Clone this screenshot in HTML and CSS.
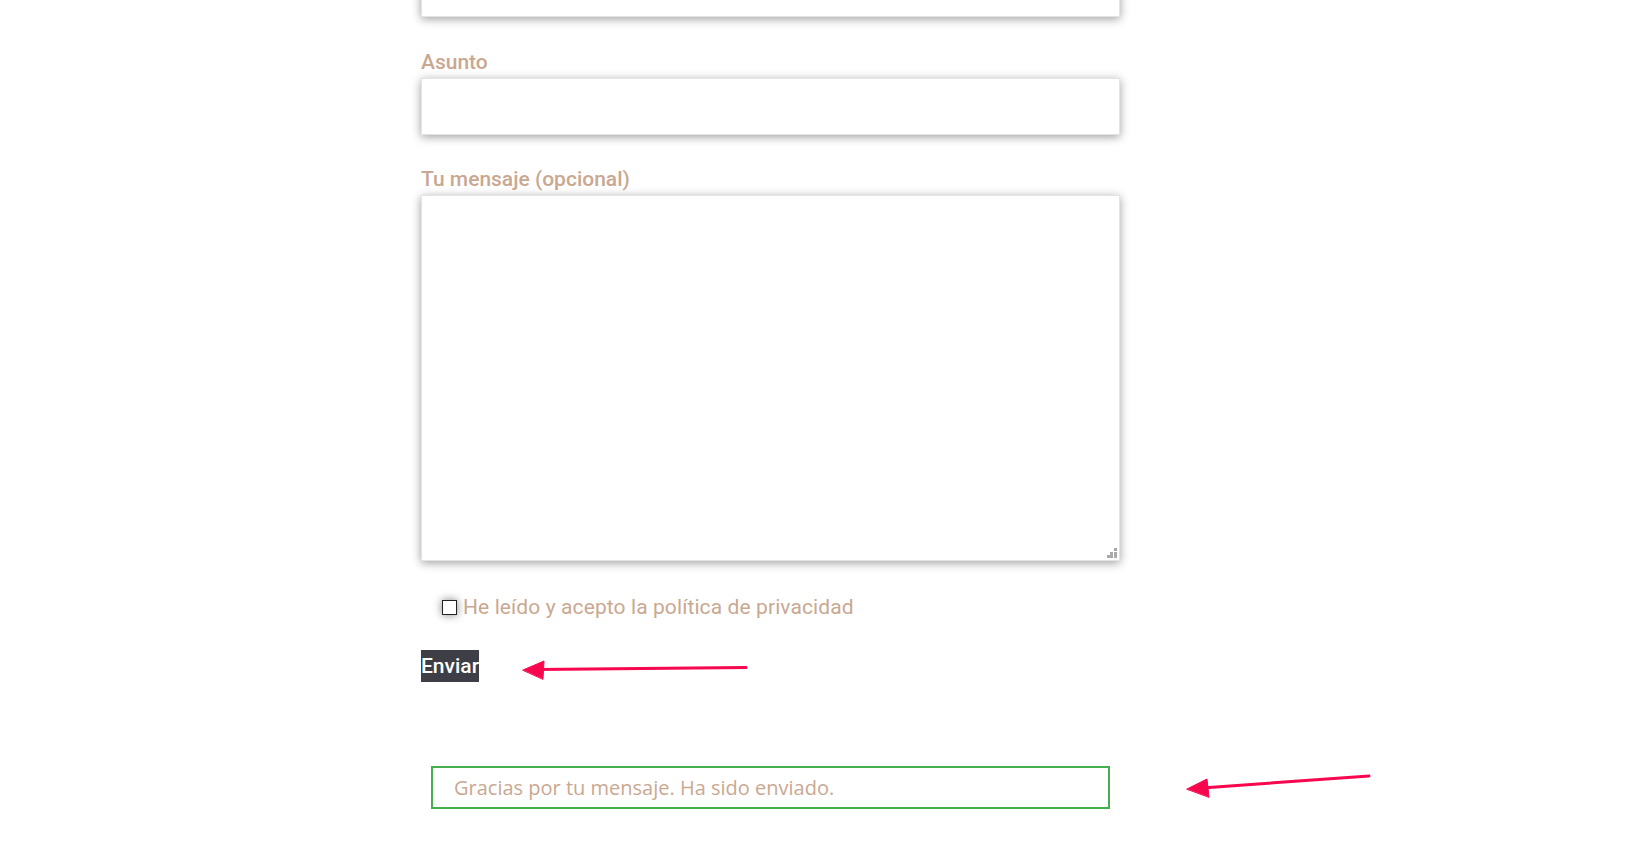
FILE: index.html
```html
<!DOCTYPE html>
<html lang="es">
<head>
  <meta charset="UTF-8" />
  <meta name="viewport" content="width=device-width, initial-scale=1.0"/>
  <title>Contacto</title>
  <link rel="stylesheet" href="styles.css">
</head>
<body>
  <form class="contact" onsubmit="return false">
    <div class="field field-top">
      <input type="email" class="input" />
    </div>

    <div class="field">
      <label for="subject">Asunto</label>
      <input type="text" id="subject" class="input" />
    </div>

    <div class="field">
      <label for="message">Tu mensaje (opcional)</label>
      <div class="area-wrap">
        <textarea id="message"></textarea>
        <span class="grip"></span>
      </div>
    </div>

    <label class="accept">
      <input type="checkbox" />
      <span>He leído y acepto la política de privacidad</span>
    </label>

    <div class="actions">
      <button type="submit">Enviar</button>
    </div>

    <div class="sent">Gracias por tu mensaje. Ha sido enviado.</div>
  </form>

  <!-- flechas de anotación -->
  <svg class="notes" width="1626" height="868" viewBox="0 0 1626 868">
    <g stroke="#f8074f" stroke-width="3" stroke-linecap="round" fill="#f8074f">
      <line x1="746" y1="667.5" x2="538" y2="669.5" />
      <polygon points="523,670 544,661 543,679" stroke-width="1" />
      <line x1="1369" y1="776" x2="1202" y2="788" />
      <polygon points="1187,789 1207,779 1209,797" stroke-width="1" />
    </g>
  </svg>
</body>
</html>
```

FILE: styles.css
```css
* {
  box-sizing: border-box;
}
body {
  margin: 0;
  background: #fff;
  font-family: Roboto, 'Liberation Sans', sans-serif;
  color: #c9a892;
  overflow: hidden;
}
.contact {
  width: 699px;
  margin-left: 421px;
}
.field {
  margin-bottom: 32px;
}
.field-top {
  margin-top: -40px;
  margin-bottom: 33px;
}
.field label {
  display: block;
  font-size: 21px;
  font-weight: 500;
  line-height: 24px;
  margin-bottom: 4px;
}
.input,
textarea {
  display: block;
  width: 100%;
  height: 57px;
  border: 1px solid #e4e4e4;
  background: #fff;
  box-shadow: 0 2px 9px rgba(0, 0, 0, 0.38);
  font: inherit;
  outline: none;
}
.area-wrap {
  position: relative;
}
textarea {
  height: 366px;
  resize: none;
}
.grip {
  position: absolute;
  right: 3px;
  bottom: 3px;
  width: 10px;
  height: 10px;
  background:
    linear-gradient(#aaa, #aaa) 7px 0 / 3px 3px no-repeat,
    linear-gradient(#aaa, #aaa) 3px 4px / 3px 3px no-repeat,
    linear-gradient(#aaa, #aaa) 7px 4px / 3px 3px no-repeat,
    linear-gradient(#aaa, #aaa) 0 7px / 3px 3px no-repeat,
    linear-gradient(#aaa, #aaa) 3px 7px / 3px 3px no-repeat,
    linear-gradient(#aaa, #aaa) 7px 7px / 3px 3px no-repeat;
}
.accept {
  display: flex;
  align-items: center;
  gap: 6px;
  margin-left: 21px;
  margin-top: 34px;
  font-size: 21px;
  line-height: 24px;
  letter-spacing: 0.1px;
}
.accept input {
  appearance: none;
  margin: 0;
  width: 15px;
  height: 15px;
  border: 1.5px solid #222;
  background: #fff;
  box-shadow: 0 0 9px rgba(0, 0, 0, 0.5);
}
.actions {
  margin-top: 31px;
}
button {
  border: none;
  margin: 0;
  padding: 0;
  height: 32px;
  width: 58px;
  background: #3e3e46;
  color: #fff;
  font-family: Roboto, 'Liberation Sans', sans-serif;
  font-size: 21px;
  font-weight: 500;
  white-space: nowrap;
  overflow: visible;
  text-align: left;
}
.sent {
  margin: 84px 10px 0;
  height: 43px;
  border: 2px solid #46b04f;
  padding: 0 0 0 21px;
  display: flex;
  align-items: center;
  font-family: 'Open Sans', sans-serif;
  font-size: 20px;
}
.notes {
  position: absolute;
  left: 0;
  top: 0;
  pointer-events: none;
}
```
